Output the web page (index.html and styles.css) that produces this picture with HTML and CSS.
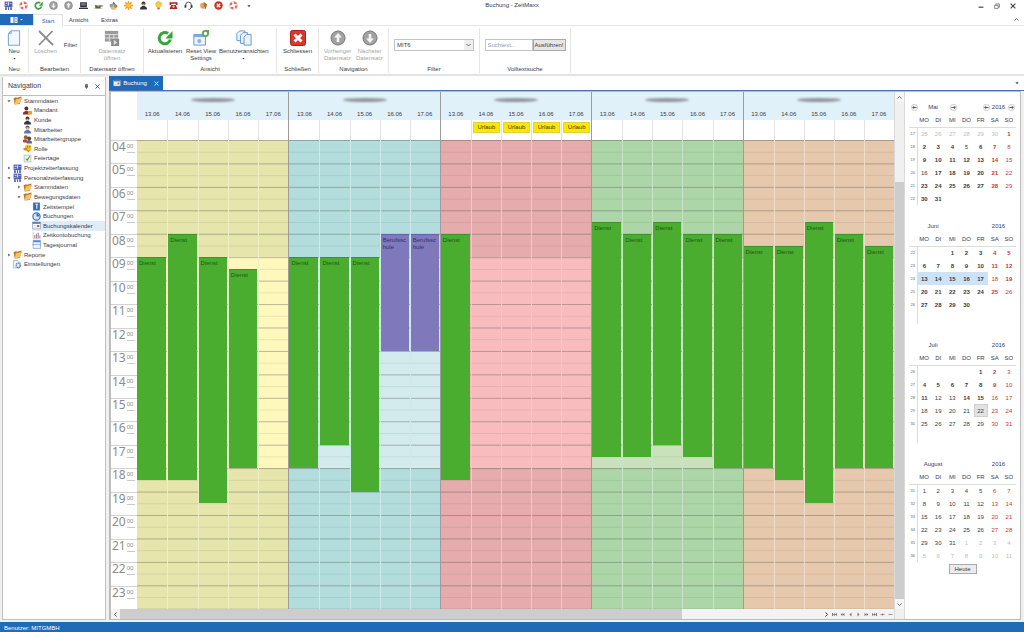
FILE: index.html
```html
<!DOCTYPE html>
<html lang="de">
<head>
<meta charset="utf-8">
<title>Buchung - ZeitMaxx</title>
<link rel="stylesheet" href="styles.css">
</head>
<body>
<svg class="sprite" aria-hidden="true">
  <symbol id="i-app" viewBox="0 0 16 16"><path fill="#5360b4" d="M1 1h14v10H1z"/><path fill="#dfe3fa" d="M3 3h3v2H3zM7 2h2v6H7zM10 4h4v1h-4zM2 7h4v1H2z"/><path fill="#5360b4" d="M2 11h3v5H2zM7 11h2v5H7zM11 11h3v5h-3z"/></symbol>
  <symbol id="i-life" viewBox="0 0 16 16"><circle cx="8" cy="8" r="5.2" fill="none" stroke="#e3605a" stroke-width="4" stroke-dasharray="4.6 3.56"/><circle cx="8" cy="8" r="7" fill="none" stroke="#eba6a1"/></symbol>
  <symbol id="i-refresh" viewBox="0 0 16 16"><path fill="none" stroke="#38a33c" stroke-width="3" d="M13.300 9.500A5.600 5.600 0 1 1 11 3.600"/><path fill="#38a33c" d="M15.500 1v7.500h-7z"/></symbol>
  <symbol id="i-up" viewBox="0 0 16 16"><circle cx="8" cy="8" r="7" fill="#a2a2a2" stroke="#777"/><path fill="#f4f4f4" d="M8 3l4 4.500H9.300V12H6.700V7.500H4z"/></symbol>
  <symbol id="i-down" viewBox="0 0 16 16"><circle cx="8" cy="8" r="7" fill="#a2a2a2" stroke="#777"/><path fill="#f4f4f4" d="M8 13l4-4.500H9.300V4H6.700v4.500H4z"/></symbol>
  <symbol id="i-screen" viewBox="0 0 16 16"><path fill="#2f3337" d="M2 2h12v9H2zM0 12h16v2H0z"/><path fill="#747b80" d="M4 4h8v4H4z"/></symbol>
  <symbol id="i-cup" viewBox="0 0 16 16"><path fill="#5c6054" d="M2 7h10v3c0 3-2 4-5 4s-5-1-5-4z"/><path fill="#b8b9a8" d="M3 7h8l-3 3zM0 13h15v1H0z"/><path stroke="#5c6054" fill="none" d="M12 8h3v2h-3"/></symbol>
  <symbol id="i-palette" viewBox="0 0 16 16"><circle cx="8" cy="10" r="5.500" fill="#e0bd75"/><path fill="#5b6f9b" d="M8 1l4 5H6z"/><circle cx="4" cy="8" r="3" fill="#879abd"/><circle cx="12" cy="9" r="3" fill="#b7793d"/></symbol>
  <symbol id="i-sun" viewBox="0 0 16 16"><path stroke="#eda52d" stroke-width="2.500" d="M8 0v16M0 8h16M2.300 2.300l11.400 11.400M13.700 2.300L2.300 13.700"/><circle cx="8" cy="8" r="4.500" fill="#ffc93c" stroke="#e38e1c"/></symbol>
  <symbol id="i-person" viewBox="0 0 16 16"><circle cx="8" cy="4.500" r="3.500" fill="#4b3329"/><path fill="#e6b88d" d="M6 5h4v4H6z"/><path fill="#2c3350" d="M2 15v-3l4-3h4l4 3v3z"/></symbol>
  <symbol id="i-person-blue" viewBox="0 0 16 16"><circle cx="8" cy="4.500" r="3.500" fill="#6f5434"/><path fill="#f0c69c" d="M6 4h4v5H6z"/><path fill="#5275c8" d="M2 15v-3l4-3h4l4 3v3z"/></symbol>
  <symbol id="i-client" viewBox="0 0 16 16"><circle cx="6" cy="4.500" r="3.500" fill="#5b2f24"/><path fill="#84362c" d="M0 15v-3l4-3h4l4 3v3z"/><path fill="#e69b3c" d="M9 9h7v6H9z"/></symbol>
  <symbol id="i-group" viewBox="0 0 16 16"><circle cx="5" cy="4" r="3.500" fill="#a05a2c"/><circle cx="11" cy="6" r="3.500" fill="#70402c"/><path fill="#b54a3c" d="M0 13V9l4-2 4 2v5z"/><path fill="#5469a8" d="M7 15v-4l3-2h2l4 3v3z"/></symbol>
  <symbol id="i-bulb" viewBox="0 0 16 16"><path fill="#f9cf34" stroke="#dba91c" d="M8 1a5 5 0 0 1 3 9l-1 2H6l-1-2a5 5 0 0 1 3-9z"/><path fill="#7e7c6d" d="M6 12h4v3H6z"/></symbol>
  <symbol id="i-phone" viewBox="0 0 16 16"><path fill="#b5211f" d="M1 2h14v5h-3V5H4v2H1zM4 7h8l3 7H1z"/><circle cx="8" cy="10" r="2" fill="#f5cbc7"/></symbol>
  <symbol id="i-headset" viewBox="0 0 16 16"><path fill="none" stroke="#343a40" stroke-width="1.500" d="M3 9V7a5 5 0 0 1 10 0v5l-3 3H8"/><path fill="#343a40" d="M1 7h3v5H1zM12 7h3v5h-3z"/></symbol>
  <symbol id="i-box" viewBox="0 0 16 16"><path fill="#dba262" d="M2 5l7-3 5 4-2 8-9-1z"/><path fill="#a56b32" d="M9 2l5 4-2 8-3-6z"/></symbol>
  <symbol id="i-stop" viewBox="0 0 16 16"><circle cx="8" cy="8" r="7.500" fill="#da2a24"/><path stroke="#fff" stroke-width="2.500" d="M5 5l6 6M11 5l-6 6"/></symbol>
  <symbol id="i-close" viewBox="0 0 16 16"><rect x=".5" y=".5" width="15" height="15" rx="2" fill="#d9352a" stroke="#a8211a"/><path stroke="#fff" stroke-width="3" d="M4.500 4.500l7 7M11.500 4.500l-7 7"/></symbol>
  <symbol id="i-page" viewBox="0 0 16 20"><path fill="#f1f7fd" stroke="#7ba7d6" stroke-width="1.300" d="M4.500 1H15v18H1V4.500z"/><path fill="#b9d3ee" stroke="#7ba7d6" d="M4.500 1v3.500H1z"/></symbol>
  <symbol id="i-pages" viewBox="0 0 18 18"><g fill="#eaf3fc" stroke="#5b94cf"><path d="M4 1h6v11H1V4z"/><path d="M8 3h5v12H5V6z"/><path d="M12 5h5v12H9V8z"/></g></symbol>
  <symbol id="i-delete" viewBox="0 0 16 16"><path stroke="#8c8c8c" stroke-width="1.800" fill="none" d="M1 1l14 14M14.500 1L1 15"/></symbol>
  <symbol id="i-record" viewBox="0 0 18 18"><path fill="#9a9a9a" d="M1 1h15v12H1z"/><path stroke="#e5e5e5" d="M1 5h15M1 9h15M6 5v8M11 5v8"/><path fill="#8b8b8b" d="M8 10h9v8H8z"/><path fill="#ddd" d="M11 11l4 3-4 3z"/></symbol>
  <symbol id="i-reset" viewBox="0 0 18 18"><path fill="#eef5fc" stroke="#5390cf" d="M1 5h13v12H1z"/><path fill="#76aee4" d="M1 5h13v3H1z"/><circle cx="7" cy="12.500" r="2.400" fill="#8fb9e2"/><circle cx="14" cy="4" r="3" fill="#fff" stroke="#58a94e" stroke-width="2"/><path fill="#58a94e" d="M13 0h5v4z"/></symbol>
  <symbol id="i-folder" viewBox="0 0 16 16"><path fill="#c07a2a" d="M1 4l4-2 2 1 8-2v3l-3 10-9 1z"/><path fill="#f7c36a" d="M5 6l11-3-4 10-9 2z"/></symbol>
  <symbol id="i-role" viewBox="0 0 16 16"><circle cx="9" cy="7" r="6" fill="#f4c52f"/><path fill="#cc8c22" d="M1 7h7v4H1zM6 11h7l-3 4z"/><path fill="#8b6213" d="M7 4h2v2H7zM11 4h2v2h-2z"/></symbol>
  <symbol id="i-check" viewBox="0 0 16 16"><path fill="#f6f8f4" stroke="#91a091" d="M2 2h12v12H2z"/><path stroke="#46a04a" stroke-width="2" fill="none" d="M5 8l2.500 3L12 4"/></symbol>
  <symbol id="i-stamp" viewBox="0 0 16 16"><path fill="#2f6cbd" d="M2 1h12v14H2z"/><path fill="#e5effa" d="M6 3h5v2H6zM7.500 5h2v7h-2z"/></symbol>
  <symbol id="i-clock" viewBox="0 0 16 16"><circle cx="8" cy="8" r="6.500" fill="#d7e5f5" stroke="#3d6fae" stroke-width="2"/><path fill="#3d6fae" d="M8 3v5h5A5 5 0 0 0 8 3z"/></symbol>
  <symbol id="i-cal" viewBox="0 0 16 16"><path fill="#fff" stroke="#6a87b5" d="M1 2h14v12H1z"/><path fill="#5078b3" d="M1 2h14v3H1z"/><path fill="#c75850" d="M9 7h4v4H9z"/><path stroke="#aab8cc" d="M3 8h5M3 11h5"/></symbol>
  <symbol id="i-chart" viewBox="0 0 16 16"><path fill="none" stroke="#a8a8b5" d="M2 1v13h13"/><path fill="#d0736d" d="M4 7h2v6H4zM10 3h2v10h-2z"/><path fill="#8699bd" d="M7 5h2v8H7zM13 8h2v5h-2z"/></symbol>
  <symbol id="i-journal" viewBox="0 0 16 16"><path fill="#eef5fc" stroke="#4f8dcc" d="M2 1h13v14H2z"/><path fill="#4f8dcc" d="M2 1h13v3H2zM0 8h16v1H0z"/></symbol>
  <symbol id="i-settings" viewBox="0 0 16 16"><path fill="#eff4fa" stroke="#8099b8" d="M1 1h8l3 3v10H1z"/><circle cx="9.500" cy="9.500" r="3.800" fill="none" stroke="#4577b4" stroke-width="2.500" stroke-dasharray="2 1"/></symbol>
  <symbol id="i-win-min" viewBox="0 0 10 10"><path stroke="#444" stroke-width="2" d="M1 7h8"/></symbol>
  <symbol id="i-win-max" viewBox="0 0 10 10"><path fill="none" stroke="#444" d="M1 4h6v5H1zM3 4V1.500h6V7H7"/></symbol>
  <symbol id="i-x" viewBox="0 0 10 10"><path stroke="currentColor" stroke-width="1.700" d="M1 1l8 8M9 1L1 9"/></symbol>
  <symbol id="i-pin" viewBox="0 0 10 10"><path stroke="#444" stroke-width="1.200" fill="#777" d="M3 1h4v5H3zM2 6.500h6M5 6v4"/></symbol>
  <symbol id="i-chev-up" viewBox="0 0 10 10"><path stroke="#555" stroke-width="1.700" fill="none" d="M1 7l4-4 4 4"/></symbol>
  <symbol id="i-chev-down" viewBox="0 0 10 10"><path stroke="#555" stroke-width="1.700" fill="none" d="M1 3l4 4 4-4"/></symbol>
  <symbol id="i-chev-left" viewBox="0 0 10 10"><path stroke="#333" stroke-width="1.700" fill="none" d="M7 1L3 5l4 4"/></symbol>
  <symbol id="i-chev-right" viewBox="0 0 10 10"><path stroke="#333" stroke-width="2" fill="none" d="M3 1l4 4-4 4"/></symbol>
  <symbol id="i-arrow-left" viewBox="0 0 10 10"><circle cx="5" cy="5" r="4.500" fill="#fafafa" stroke="#bbb"/><path stroke="#444" stroke-width="1.200" fill="none" d="M8 5H2.500M4.500 3l-2 2 2 2"/></symbol>
  <symbol id="i-arrow-right" viewBox="0 0 10 10"><circle cx="5" cy="5" r="4.500" fill="#fafafa" stroke="#bbb"/><path stroke="#444" stroke-width="1.200" fill="none" d="M2 5h5.500M5.500 3l2 2-2 2"/></symbol>
  <symbol id="i-drop" viewBox="0 0 10 10"><path fill="currentColor" d="M1 3h8L5 8z"/></symbol>
  <symbol id="i-menu" viewBox="0 0 16 16"><path fill="#fff" d="M1 2h6v12H1zM9 2h6v12H9z"/><path stroke="#1f6bb8" d="M10 5h4M10 8h4M10 11h4"/></symbol>
  <symbol id="i-first" viewBox="0 0 10 10"><path fill="currentColor" d="M0 2h2v6H0zM6 2v6L2 5zM10 2v6L6 5z"/></symbol>
  <symbol id="i-rew" viewBox="0 0 10 10"><path fill="currentColor" d="M5 2v6L1 5zM9 2v6L5 5z"/></symbol>
  <symbol id="i-prev" viewBox="0 0 10 10"><path fill="currentColor" d="M7 1v8L3 5z"/></symbol>
  <symbol id="i-next" viewBox="0 0 10 10"><path fill="currentColor" d="M3 1v8l4-4z"/></symbol>
  <symbol id="i-fwd" viewBox="0 0 10 10"><path fill="currentColor" d="M1 2v6l4-3zM5 2v6l4-3z"/></symbol>
  <symbol id="i-last" viewBox="0 0 10 10"><path fill="currentColor" d="M0 2v6l4-3zM4 2v6l4-3zM8 2h2v6H8z"/></symbol>
  <symbol id="i-plus" viewBox="0 0 10 10"><path stroke="currentColor" stroke-width="1.500" d="M1 5h8M5 3v4"/></symbol>
  <symbol id="i-minus" viewBox="0 0 10 10"><path stroke="currentColor" stroke-width="1.500" d="M1 5h8"/></symbol>
</svg>

<header class="titlebar">
  <div class="quick" id="quick"></div>
  <h1 class="window-title">Buchung - ZeitMaxx</h1>
  <div class="window-buttons">
    <button aria-label="Minimieren"><svg class="ic6"><use href="#i-win-min"/></svg></button>
    <button aria-label="Wiederherstellen"><svg class="ic6"><use href="#i-win-max"/></svg></button>
    <button aria-label="Schließen"><svg class="ic6"><use href="#i-x"/></svg></button>
  </div>
</header>

<nav class="tabs">
  <button class="app-menu" aria-label="Menü"><svg class="ic8"><use href="#i-menu"/></svg><svg class="ic3"><use href="#i-drop"/></svg></button>
  <button class="tab tab-active">Start</button>
  <button class="tab">Ansicht</button>
  <button class="tab">Extras</button>
  <button class="collapse" aria-label="Menüband minimieren"><svg class="ic5"><use href="#i-chev-up"/></svg></button>
</nav>

<section class="ribbon">
  <div class="rgroup g-new">
    <div class="rbody"><button class="big"><svg class="ic16"><use href="#i-page"/></svg><span>Neu</span><svg class="ic3"><use href="#i-drop"/></svg></button></div>
    <div class="rlabel">Neu</div>
  </div>
  <div class="rgroup g-edit">
    <div class="rbody"><button class="big" disabled><svg class="ic16"><use href="#i-delete"/></svg><span>Löschen</span></button><button class="small">Filter</button></div>
    <div class="rlabel">Bearbeiten</div>
  </div>
  <div class="rgroup g-open">
    <div class="rbody"><button class="big" disabled><svg class="ic16"><use href="#i-record"/></svg><span>Datensatz<br>öffnen</span></button></div>
    <div class="rlabel">Datensatz öffnen</div>
  </div>
  <div class="rgroup g-view">
    <div class="rbody">
      <button class="big"><svg class="ic16"><use href="#i-refresh"/></svg><span>Aktualisieren</span></button>
      <button class="big"><svg class="ic16"><use href="#i-reset"/></svg><span>Reset View<br>Settings</span></button>
      <button class="big"><svg class="ic16"><use href="#i-pages"/></svg><span>Benutzeransichten</span><svg class="ic3"><use href="#i-drop"/></svg></button>
    </div>
    <div class="rlabel">Ansicht</div>
  </div>
  <div class="rgroup g-close">
    <div class="rbody"><button class="big"><svg class="ic16"><use href="#i-close"/></svg><span>Schliessen</span></button></div>
    <div class="rlabel">Schließen</div>
  </div>
  <div class="rgroup g-nav">
    <div class="rbody">
      <button class="big" disabled><svg class="ic16"><use href="#i-up"/></svg><span>Vorheriger<br>Datensatz</span></button>
      <button class="big" disabled><svg class="ic16"><use href="#i-down"/></svg><span>Nächster<br>Datensatz</span></button>
    </div>
    <div class="rlabel">Navigation</div>
  </div>
  <div class="rgroup g-filter">
    <div class="rbody center">
      <div class="select-wrap"><select aria-label="Filter"><option>MIT6</option></select><svg class="ic5"><use href="#i-chev-down"/></svg></div>
    </div>
    <div class="rlabel">Filter</div>
  </div>
  <div class="rgroup g-search">
    <div class="rbody center"><input type="text" placeholder="Suchtext..." aria-label="Suchtext"><button class="run">Ausführen!</button></div>
    <div class="rlabel">Volltextsuche</div>
  </div>
</section>

<main class="workspace">
  <aside class="navpanel">
    <div class="navhead"><h2>Navigation</h2><button aria-label="Anheften"><svg class="ic5"><use href="#i-pin"/></svg></button><button aria-label="Schließen"><svg class="ic5"><use href="#i-x"/></svg></button></div>
    <ul class="tree" id="tree"></ul>
  </aside>

  <section class="document">
    <div class="doctabs">
      <button class="doctab"><svg class="ic8"><use href="#i-cal"/></svg>Buchung<svg class="ic5"><use href="#i-x"/></svg></button>
      <button class="doclist" aria-label="Dokumente"><svg class="ic4"><use href="#i-drop"/></svg></button>
    </div>
    <div class="docbody">
      <div class="schedule">
        <div class="board">
          <div class="timecol"><div class="timehead"></div><div class="hours" id="hours"></div></div>
          <div class="people" id="people"></div>
        </div>
        <div class="hscroll">
          <button aria-label="Nach links"><svg class="ic5"><use href="#i-chev-left"/></svg></button>
          <div class="htrack"><div class="hthumb"></div></div>
          <div class="pager" id="pager"></div>
        </div>
      </div>
      <div class="vscroll">
        <button aria-label="Nach oben"><svg class="ic5"><use href="#i-chev-up"/></svg></button>
        <div class="vtrack"><div class="vthumb"></div></div>
        <button aria-label="Nach unten"><svg class="ic5"><use href="#i-chev-down"/></svg></button>
      </div>
      <aside class="months"><div id="months"></div><button class="today">Heute</button></aside>
    </div>
  </section>
</main>
<footer class="status">Benutzer: MITGMBH</footer>
<script src="app.js"></script>
</body>
</html>
```

FILE: styles.css
```css
* { box-sizing: border-box; }
body {
  margin: 0;
  height: 100vh;
  display: flex;
  flex-direction: column;
  overflow: hidden;
  background: #fff;
  color: #3b3b46;
  font: 6px/8px "Liberation Sans", Arial, sans-serif;
}
button, input, select { font: inherit; color: inherit; margin: 0; padding: 0; border: 0; background: none; }
button { display: flex; align-items: center; justify-content: center; }
svg { display: block; flex: none; }
h1, h2 { margin: 0; font-weight: normal; }
.sprite { position: absolute; width: 0; height: 0; }
.ic3 { width: 3px; height: 3px; }
.ic4 { width: 4px; height: 4px; }
.ic5 { width: 5px; height: 5px; }
.ic6 { width: 6px; height: 6px; }
.ic7 { width: 7px; height: 7px; }
.ic8 { width: 8px; height: 8px; }
.ic9 { width: 9px; height: 9px; }
.ic16 { width: 16px; height: 16px; }

.titlebar { display: grid; grid-template-columns: 1fr auto 1fr; align-items: start; height: 13px; flex: none; }
.quick { display: flex; padding-left: 1px; }
.quick button { width: 15px; height: 11px; }
.window-title { font-size: 6px; line-height: 11px; }
.window-buttons { display: flex; justify-content: flex-end; gap: 10px; padding: 3px 8px 0 0; }

.tabs { display: flex; flex: none; height: 13px; padding-top: 1px; border-bottom: 1px solid #e6e6e6; }
.app-menu { width: 33px; background: #1f6bb8; color: #fff; gap: 2px; }
.tab { width: 31px; }
.tab-active { width: 30px; height: 12px; color: #2b6cb5; border: 1px solid #e2e2e2; border-bottom: 0; background: #fff; }
.collapse { margin-left: auto; width: 16px; }

.ribbon { display: flex; flex: none; height: 50px; border-bottom: 2px solid #e3e3e3; }
.rgroup { display: flex; flex-direction: column; margin: 2px 0 1px; border-right: 1px solid #e6e6e6; }
.rbody { flex: 1; display: flex; justify-content: center; }
.center { align-items: flex-start; padding-top: 11px; }
.rlabel { text-align: center; height: 8px; white-space: nowrap; }
.g-new { width: 29px; }
.g-edit { width: 52px; }
.g-open { width: 63px; }
.g-view { width: 133px; }
.g-close { width: 42px; }
.g-nav { width: 70px; }
.g-filter { width: 91px; }
.g-search { width: 91px; }
.big { flex-direction: column; justify-content: flex-start; gap: 2px; min-width: 32px; line-height: 7px; padding-top: 2px; white-space: nowrap; }
.g-new .big { min-width: 24px; }
.g-view .big { min-width: 36px; }
.g-view .rbody { justify-content: flex-start; padding-left: 3px; }
.big:disabled { color: #a5a5a5; }
.small { width: 18px; height: 34px; }
.select-wrap { display: grid; align-items: center; width: 80px; height: 12px; border: 1px solid #c4c4c4; }
.select-wrap > * { grid-area: 1 / 1; }
.select-wrap select { appearance: none; width: 100%; height: 10px; padding-left: 2px; }
.select-wrap svg { justify-self: end; width: 9px; height: 10px; padding: 2px; background: #eee; pointer-events: none; }
.g-search input { width: 48px; height: 12px; border: 1px solid #c4c4c4; padding: 0 2px; }
.g-search input::placeholder { color: #999; opacity: 1; }
.run { width: 33px; height: 12px; border: 1px solid #a9a9a9; background: #e6e6e6; }

.workspace { flex: 1; min-height: 0; display: flex; padding-bottom: 2px; background: #f0f0f0; }
.navpanel { width: 104px; margin: 1px 3px 0 2px; border: 1px solid #c2c2c2; border-top: 0; background: #fff; flex: none; }
.navhead { display: flex; align-items: center; height: 19px; padding: 0 5px; gap: 6px; border-bottom: 1px solid #bdbdbd; }
.navhead h2 { flex: 1; font-size: 7px; }
.tree { list-style: none; margin: 0; padding: 0; height: 173px; display: grid; grid-template-rows: repeat(18, 1fr); }
.tree li { display: flex; align-items: center; gap: 2px; padding-left: 4px; white-space: nowrap; min-height: 0; }
.tree .lvl1 { padding-left: 14px; }
.tree .lvl2 { padding-left: 23px; }
.tree .selected { background: linear-gradient(to right, transparent 29px, #e0ecf7 29px); }
.tree a { color: inherit; text-decoration: none; }
.twist { width: 4px; height: 4px; color: #555; }
.twist.closed { transform: rotate(-90deg); }
.blank { width: 4px; }

.document { flex: 1; min-width: 0; display: flex; flex-direction: column; }
.doctabs { display: flex; justify-content: space-between; background: #fff; height: 15px; flex: none; border-bottom: 1px solid #4f70b5; }
.doctab { width: 54px; background: #1f6bb8; color: #fff; gap: 2px; }
.doctab svg:last-child { margin-left: 5px; }
.doclist { width: 14px; }
.docbody { flex: 1; min-height: 0; display: flex; border: 1px solid #bcbcbc; border-left-width: 2px; background: #fff; margin-right: 3px; }
.schedule { flex: 1; min-width: 0; display: flex; flex-direction: column; }
.board { flex: 1; min-height: 0; display: flex; }
.timecol { width: 26px; display: flex; flex-direction: column; flex: none; }
.timehead { height: 48px; flex: none; }
.hours { flex: 1; display: grid; grid-template-rows: repeat(20, 1fr); }
.hour { display: flex; min-height: 0; border-top: 1px solid #d3d3d3; color: #8b8b8b; padding-left: 1px; gap: 1px; }
.hour b { font: 12px/12px "Noto Sans", sans-serif; }
.hour span { align-self: flex-start; height: 12px; width: 8px; border-bottom: 1px solid #c9c9c9; line-height: 8px; padding-top: 1px; }

.people { flex: 1; min-width: 0; display: grid; grid-template-columns: repeat(5, 1fr); }
.person { display: flex; flex-direction: column; min-width: 0; border-left: 1px solid #9c9c9c; }
.person:first-child { border-left: 0; }
.name { height: 15px; background: #e1f1fa; flex: none; display: flex; align-items: center; justify-content: center; }
.smudge { width: 44px; height: 4px; border-radius: 50%; background: #8f959b; filter: blur(1px); }
.days { flex: 1; min-height: 0; display: grid; grid-template-columns: repeat(5, 1fr); }
.day { display: flex; flex-direction: column; min-width: 0; }
.date { height: 13px; flex: none; background: #e1f1fa; text-align: center; padding-top: 3px; }
.allday { height: 20px; flex: none; padding: 2px 1px; border-left: 1px solid #e3e3e3; }
.leave { height: 11px; background: #fbe800; border: 1px solid #e0d23c; color: #3c3800; text-align: center; line-height: 9px; }
.slots { flex: 1; min-height: 0; display: grid; grid-template-rows: repeat(40, minmax(0, 1fr)); grid-template-columns: 100%; border-left: 1px solid rgba(255, 255, 255, .35); }
.day:first-child .slots, .day:first-child .allday { border-left: 0; }
.work { grid-area: 11 / 1 / 29 / 2; }
.lines {
  grid-area: 1 / 1 / -1 / 2;
  background-image: linear-gradient(rgba(70, 70, 70, .28) 1px, transparent 1px), linear-gradient(rgba(90, 90, 90, .13) 1px, transparent 1px);
  background-size: 100% 5%, 100% 2.5%;
}
.yellow { background: #e6e5ab; } .yellow .work { background: #fff8bd; }
.teal { background: #b3dddd; } .teal .work { background: #d4ebee; }
.red { background: #e6abad; } .red .work { background: #f9bcbe; }
.green { background: #add6a8; } .green .work { background: #c9e2bc; }
.orange { background: #e6c9ad; } .orange .work { background: #fadcc4; }
.event { grid-column: 1; margin-right: 1px; padding: 2px; border-top: 1px solid #3c9627; background: #4aad2f; color: #1d5712; overflow: hidden; line-height: 7px; }
.school { background: #7f79bb; border-color: #6861a8; color: #332e6b; }

.hscroll { display: flex; height: 10px; flex: none; background: #f3f3f3; }
.hscroll > button { width: 9px; }
.htrack { flex: 1; }
.hthumb { width: 80%; height: 100%; background: #cdcdcd; }
.pager { display: flex; width: 71px; }
.pager button { flex: 1; color: #777; }
.vscroll { width: 11px; display: flex; flex-direction: column; padding-bottom: 10px; background: #f0f0f0; border: 1px solid #d9d9d9; border-width: 0 1px; flex: none; }
.vscroll button { height: 10px; background: #f6f6f6; }
.vtrack { flex: 1; display: flex; flex-direction: column; justify-content: flex-end; }
.vthumb { height: 84%; background: #cdcdcd; }

.months { width: 115px; flex: none; padding: 8px 4px 0 4px; }
.month { margin-bottom: 14px; }
.mhead { display: grid; grid-template-columns: 10px 28px 13px 1fr 9px 15px 10px; align-items: center; height: 14px; text-align: center; color: #39395c; }
.mhead button { height: 9px; }
.month table { border-collapse: collapse; table-layout: fixed; width: 100%; text-align: center; }
.month th, .month td { padding: 0; height: 13px; font-weight: normal; }
.month tr > :first-child { width: 8px; font-size: 4px; color: #666; border-right: 1px solid #ddd; }
.month thead th { border-bottom: 1px solid #ddd; color: #39395c; }
.month thead tr > :first-child { border-right: 0; }
.month td.bold { font-weight: bold; }
.month td.weekend { color: #cf3527; }
.month td.other { color: #bdbdbd; }
.month td.range { background: #cbe3f5; }
.month td.now { background: #e2e2e2; box-shadow: inset 0 0 0 1px #cfcfcf; }
.today { width: 28px; height: 10px; margin: -12px auto 0; border: 1px solid #aaa; background: #ececec; }

.status { flex: none; height: 10px; background: #1f6bb8; color: #fff; padding: 2px 4px 0; }
```

FILE: app.js
```js
const icon = (name, cls) => `<svg class="${cls}"><use href="#i-${name}"/></svg>`;
const byId = id => document.getElementById(id);

byId('quick').innerHTML = ['app', 'life', 'refresh', 'down', 'up', 'screen', 'cup', 'palette', 'sun', 'person', 'bulb', 'phone', 'headset', 'box', 'stop', 'life', 'drop']
  .map(n => `<button aria-label="${n}">${icon(n, n === 'drop' ? 'ic4' : 'ic9')}</button>`).join('');

byId('pager').innerHTML = ['chev-right', 'first', 'rew', 'prev', 'next', 'fwd', 'last', 'plus', 'minus']
  .map(n => `<button aria-label="${n}">${icon(n, 'ic5')}</button>`).join('');

// [level, state, icon, text]
const tree = [
  [0, 'open', 'folder', 'Stammdaten'],
  [1, '', 'client', 'Mandant'], [1, '', 'person', 'Kunde'], [1, '', 'person-blue', 'Mitarbeiter'],
  [1, '', 'group', 'Mitarbeitergruppe'], [1, '', 'role', 'Rolle'], [1, '', 'check', 'Feiertage'],
  [0, 'closed', 'app', 'Projektzeiterfassung'], [0, 'open', 'app', 'Personalzeiterfassung'],
  [1, 'closed', 'folder', 'Stammdaten'], [1, 'open', 'folder', 'Bewegungsdaten'],
  [2, '', 'stamp', 'Zeitstempel'], [2, '', 'clock', 'Buchungen'], [2, 'selected', 'cal', 'Buchungskalender'],
  [2, '', 'chart', 'Zeitkontobuchung'], [2, '', 'journal', 'Tagesjournal'],
  [0, 'closed', 'folder', 'Reporte'], [0, '', 'settings', 'Einstellungen']
];
byId('tree').innerHTML = tree.map(([lvl, state, ic, text]) => {
  const twist = state === 'open' || state === 'closed' ? icon('drop', 'twist ' + state) : '<span class="blank"></span>';
  return `<li class="lvl${lvl} ${state === 'selected' ? 'selected' : ''}">${twist}${icon(ic, 'ic9')}<a href="#">${text}</a></li>`;
}).join('');

byId('hours').innerHTML = Array.from({ length: 20 }, (_, i) =>
  `<div class="hour"><b>${String(i + 4).padStart(2, '0')}</b><span>00</span></div>`).join('');

// Start and end in half hours counted from 04:00
const people = [
  ['yellow', [[10, 29], [8, 29], [10, 31], [11, 28], null]],
  ['teal', [[10, 28], [10, 26], [10, 30], [8, 18, 1], [8, 18, 1]]],
  ['red', [[8, 29], 'leave', 'leave', 'leave', 'leave']],
  ['green', [[7, 27], [8, 27], [7, 26], [8, 27], [8, 28]]],
  ['orange', [[9, 28], [9, 29], [7, 31], [8, 28], [9, 28]]]
];
byId('people').innerHTML = people.map(([color, days]) => `<div class="person">
  <div class="name"><span class="smudge"></span></div>
  <div class="days">${days.map((d, i) => `<div class="day">
    <div class="date">${13 + i}.06</div>
    <div class="allday">${d === 'leave' ? '<div class="leave">Urlaub</div>' : ''}</div>
    <div class="slots ${color}"><div class="work"></div><div class="lines"></div>${Array.isArray(d)
      ? `<div class="event ${d[2] ? 'school' : ''}" style="grid-row:${d[0] + 1}/${d[1] + 1}">${d[2] ? 'Berufssc<br>hule' : 'Dienst'}</div>` : ''}</div>
  </div>`).join('')}</div></div>`).join('');

const range = (a, b) => Array.from({ length: b - a + 1 }, (_, i) => a + i);
const months = [
  { name: 'Mai', week: 17, weeks: 6, first: -5, len: 31, prev: 30, light: [5, 8, 15, 16, 22, 29] },
  { name: 'Juni', week: 22, weeks: 5, first: -1, len: 30, light: [18, 26], range: range(13, 17) },
  { name: 'Juli', week: 26, weeks: 5, first: -3, len: 31, light: [3, 10, 12, 13, ...range(16, 31)], now: 22 },
  { name: 'August', week: 31, weeks: 6, first: 1, len: 31, light: range(1, 31), next: true }
];
byId('months').innerHTML = months.map((m, k) => {
  const nav = (n, label) => k === 0 ? `<button aria-label="${label}">${icon(n, 'ic7')}</button>` : '<span></span>';
  let rows = '';
  for (let w = 0; w < 6; w++) {
    rows += `<tr><th>${w < m.weeks ? m.week + w : ''}</th>`;
    for (let i = 0; i < 7; i++) {
      const d = m.first + w * 7 + i;
      let text = d, cls = i > 4 ? 'weekend' : '';
      if (d < 1) { text = m.prev ? m.prev + d : ''; cls = 'other'; }
      else if (d > m.len) { text = m.next ? d - m.len : ''; cls = 'other'; }
      else {
        if (!m.light.includes(d)) cls += ' bold';
        if (m.range && m.range.includes(d)) cls += ' range';
        if (m.now === d) cls += ' now';
      }
      rows += `<td class="${cls}">${text}</td>`;
    }
    rows += '</tr>';
  }
  return `<div class="month"><div class="mhead">${nav('arrow-left', 'Voriger Monat')}<span>${m.name}</span>${nav('arrow-right', 'Nächster Monat')}<span></span>${nav('arrow-left', 'Voriges Jahr')}<span>2016</span>${nav('arrow-right', 'Nächstes Jahr')}</div>
  <table><thead><tr><th></th>${['MO', 'DI', 'MI', 'DO', 'FR', 'SA', 'SO'].map(t => `<th>${t}</th>`).join('')}</tr></thead><tbody>${rows}</tbody></table></div>`;
}).join('');
```
